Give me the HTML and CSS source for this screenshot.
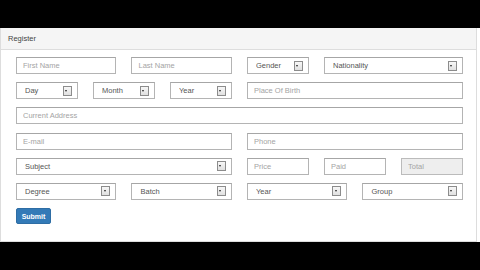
FILE: index.html
```html
<!DOCTYPE html>
<html>
<head>
<meta charset="utf-8">
<link rel="stylesheet" href="styles.css">
</head>
<body>
<div class="stage">
  <div class="panel">
    <div class="panel-heading">Register</div>
    <form class="panel-body">
      <div class="grid">
        <input class="field s3" placeholder="First Name">
        <input class="field s3" placeholder="Last Name">
        <label class="select s2"><select><option>Gender</option></select><span class="arrow"></span></label>
        <label class="select s4"><select><option>Nationality</option></select><span class="arrow"></span></label>

        <label class="select s2"><select><option>Day</option></select><span class="arrow"></span></label>
        <label class="select s2"><select><option>Month</option></select><span class="arrow"></span></label>
        <label class="select s2"><select><option>Year</option></select><span class="arrow"></span></label>
        <input class="field s6" placeholder="Place Of Birth">

        <input class="field s12" placeholder="Current Address">

        <input class="field s6" placeholder="E-mail">
        <input class="field s6" placeholder="Phone">

        <label class="select s6"><select><option>Subject</option></select><span class="arrow"></span></label>
        <input class="field s2" placeholder="Price">
        <input class="field s2" placeholder="Paid">
        <input class="field s2 disabled" placeholder="Total" disabled>

        <label class="select s3"><select><option>Degree</option></select><span class="arrow"></span></label>
        <label class="select s3"><select><option>Batch</option></select><span class="arrow"></span></label>
        <label class="select s3"><select><option>Year</option></select><span class="arrow"></span></label>
        <label class="select s3"><select><option>Group</option></select><span class="arrow"></span></label>
      </div>
      <button type="button" class="btn">Submit</button>
    </form>
  </div>
</div>
</body>
</html>
```

FILE: styles.css
```css
html, body {
  margin: 0;
  padding: 0;
  background: #000;
  width: 480px;
  height: 270px;
  overflow: hidden;
  font-family: "Liberation Sans", Arial, sans-serif;
  font-size: 7.5px;
}

.stage {
  margin-top: 28px;
  height: 214px;
  background: #fff;
}

.panel {
  box-sizing: border-box;
  width: 477px;
  height: 214px;
  border: 1px solid #ddd;
  border-top: none;
  background: #fff;
}

.panel-heading {
  box-sizing: border-box;
  height: 21.5px;
  padding-left: 7px;
  display: flex;
  align-items: center;
  background: #f5f5f5;
  border-bottom: 1px solid #ddd;
  color: #444;
}

.panel-body {
  margin: 0;
  padding: 7.8px 14px 0 15px;
}

.grid {
  display: grid;
  grid-template-columns: repeat(12, 1fr);
  column-gap: 15.3px;
  row-gap: 8.1px;
  width: 446.7px;
}

.s2 { grid-column: span 2; }
.s3 { grid-column: span 3; }
.s4 { grid-column: span 4; }
.s6 { grid-column: span 6; }
.s12 { grid-column: span 12; }

.field {
  box-sizing: border-box;
  height: 17px;
  margin: 0;
  padding: 0 0 0 6px;
  border: 1px solid #b4b4b4;
  border-top-color: #a6a6a6;
  background: #fff;
  font-family: inherit;
  font-size: 7.5px;
  color: #555;
  outline: none;
  min-width: 0;
}

.field::placeholder {
  color: #a4a4a4;
}

.field.disabled {
  background: #eee;
  border-color: #bbb;
}

.select {
  position: relative;
  display: block;
  height: 17px;
  min-width: 0;
}

.select select {
  -webkit-appearance: none;
  appearance: none;
  box-sizing: border-box;
  width: 100%;
  height: 17px;
  margin: 0;
  padding: 0 0 0 8px;
  border: 1px solid #b4b4b4;
  border-top-color: #a6a6a6;
  border-radius: 0;
  background: #fff;
  font-family: inherit;
  font-size: 7.5px;
  color: #555;
  outline: none;
}

.arrow {
  position: absolute;
  right: 6px;
  top: 3.5px;
  box-sizing: border-box;
  width: 9px;
  height: 10px;
  border: 1px solid #8c8c8c;
  background: linear-gradient(#f7f7f7, #e0e0e0);
  pointer-events: none;
}

.arrow::after {
  content: "";
  position: absolute;
  left: 1.8px;
  top: 3.2px;
  border-left: 1.7px solid transparent;
  border-right: 1.7px solid transparent;
  border-top: 2.2px solid #222;
}

.btn {
  display: block;
  margin: 8.5px 0 0 0;
  width: 35px;
  height: 16px;
  padding: 0;
  border: 1px solid #2e6da4;
  border-radius: 2px;
  background: #337ab7;
  color: #fff;
  font-family: inherit;
  font-weight: bold;
  font-size: 7px;
}
```
